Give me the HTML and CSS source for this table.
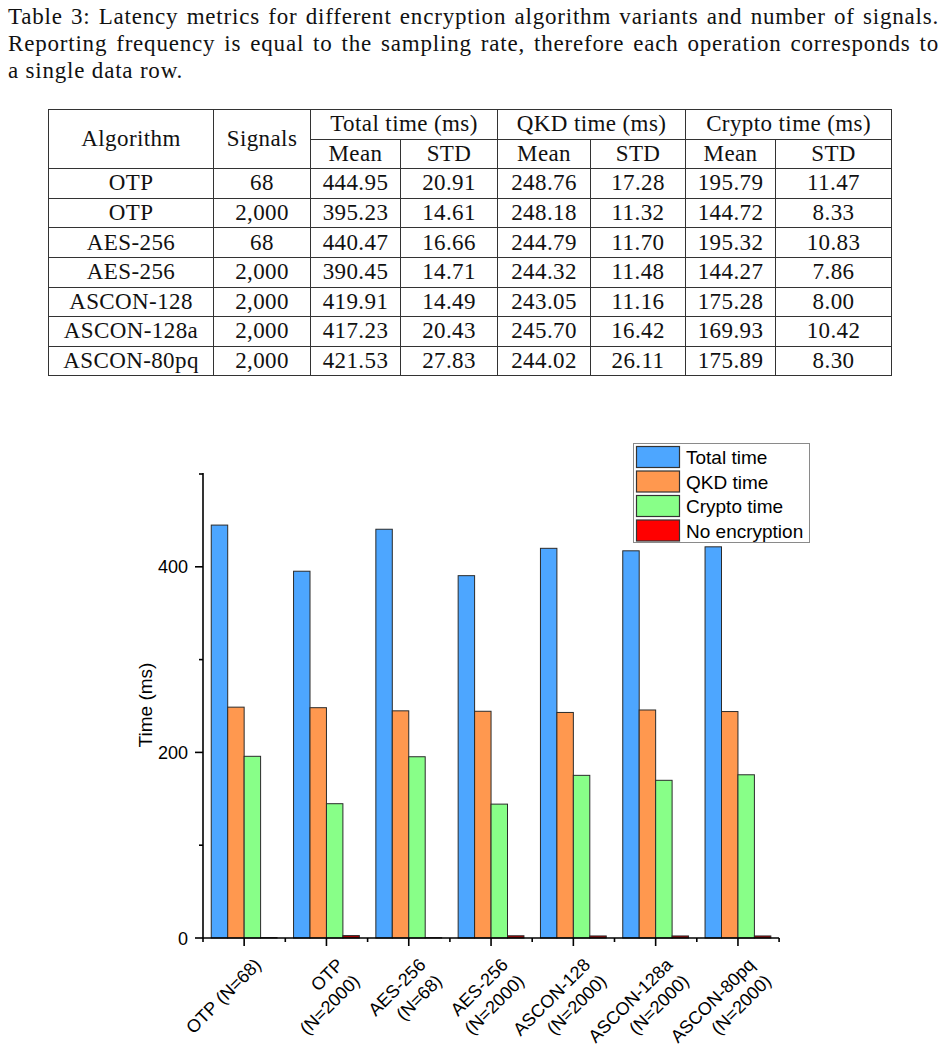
FILE: index.html
```html
<!DOCTYPE html>
<html lang="en">
<head>
    <meta charset="UTF-8">
    <meta name="viewport" content="width=device-width, initial-scale=1.0">
    <title>Latency metrics</title>
    <link rel="stylesheet" href="styles.css">
</head>
<body>
    <p class="caption">
        <span class="line justified">Table 3: Latency metrics for different encryption algorithm variants and number of signals.</span>
        <span class="line justified">Reporting frequency is equal to the sampling rate, therefore each operation corresponds to</span>
        <span class="line">a single data row.</span>
    </p>

    <table class="metrics">
        <colgroup>
            <col class="col-algo">
            <col class="col-signals">
            <col class="col-90"><col class="col-97">
            <col class="col-93"><col class="col-95">
            <col class="col-90"><col class="col-116">
        </colgroup>
        <thead>
            <tr>
                <th rowspan="2">Algorithm</th>
                <th rowspan="2">Signals</th>
                <th colspan="2">Total time (ms)</th>
                <th colspan="2">QKD time (ms)</th>
                <th colspan="2">Crypto time (ms)</th>
            </tr>
            <tr>
                <th>Mean</th><th>STD</th>
                <th>Mean</th><th>STD</th>
                <th>Mean</th><th>STD</th>
            </tr>
        </thead>
        <tbody>
            <tr><td>OTP</td><td>68</td><td>444.95</td><td>20.91</td><td>248.76</td><td>17.28</td><td>195.79</td><td>11.47</td></tr>
            <tr><td>OTP</td><td>2,000</td><td>395.23</td><td>14.61</td><td>248.18</td><td>11.32</td><td>144.72</td><td>8.33</td></tr>
            <tr><td>AES-256</td><td>68</td><td>440.47</td><td>16.66</td><td>244.79</td><td>11.70</td><td>195.32</td><td>10.83</td></tr>
            <tr><td>AES-256</td><td>2,000</td><td>390.45</td><td>14.71</td><td>244.32</td><td>11.48</td><td>144.27</td><td>7.86</td></tr>
            <tr><td>ASCON-128</td><td>2,000</td><td>419.91</td><td>14.49</td><td>243.05</td><td>11.16</td><td>175.28</td><td>8.00</td></tr>
            <tr><td>ASCON-128a</td><td>2,000</td><td>417.23</td><td>20.43</td><td>245.70</td><td>16.42</td><td>169.93</td><td>10.42</td></tr>
            <tr><td>ASCON-80pq</td><td>2,000</td><td>421.53</td><td>27.83</td><td>244.02</td><td>26.11</td><td>175.89</td><td>8.30</td></tr>
        </tbody>
    </table>

    <!-- Chart uses page coordinates through the viewBox -->
    <svg id="chart" class="chart" width="947" height="649" viewBox="0 400 947 649"></svg>

<script>
const groups = [
    { label: ['OTP (N=68)'], total: 444.95, qkd: 248.76, crypto: 195.79, none: 0.4 },
    { label: ['OTP', '(N=2000)'], total: 395.23, qkd: 248.18, crypto: 144.72, none: 2.6 },
    { label: ['AES-256', '(N=68)'], total: 440.47, qkd: 244.79, crypto: 195.32, none: 0.4 },
    { label: ['AES-256', '(N=2000)'], total: 390.45, qkd: 244.32, crypto: 144.27, none: 2.4 },
    { label: ['ASCON-128', '(N=2000)'], total: 419.91, qkd: 243.05, crypto: 175.28, none: 2.2 },
    { label: ['ASCON-128a', '(N=2000)'], total: 417.23, qkd: 245.70, crypto: 169.93, none: 2.2 },
    { label: ['ASCON-80pq', '(N=2000)'], total: 421.53, qkd: 244.02, crypto: 175.89, none: 2.2 }
];

const series = [
    { key: 'total', name: 'Total time', cls: 'bar-total' },
    { key: 'qkd', name: 'QKD time', cls: 'bar-qkd' },
    { key: 'crypto', name: 'Crypto time', cls: 'bar-crypto' },
    { key: 'none', name: 'No encryption', cls: 'bar-none' }
];

const Y0 = 939;        // pixel row of value 0
const SCALE = 0.928;   // pixels per ms
const X0 = 203;        // y axis position
const GROUP_W = 82.3;
const BAR_W = 16.45;

const svg = document.getElementById('chart');

function add(tag, attrs, text) {
    const el = document.createElementNS('http://www.w3.org/2000/svg', tag);
    for (const name in attrs) {
        el.setAttribute(name, attrs[name]);
    }
    if (text) el.textContent = text;
    svg.appendChild(el);
    return el;
}

function yPos(v) {
    return Y0 - v * SCALE;
}

// bars
groups.forEach((g, i) => {
    const cx = X0 + (i + 0.5) * GROUP_W;
    series.forEach((s, k) => {
        add('rect', {
            x: cx - 2 * BAR_W + k * BAR_W,
            y: yPos(g[s.key]),
            width: BAR_W,
            height: g[s.key] * SCALE,
            class: 'bar ' + s.cls
        });
    });
});

// y axis
add('line', { x1: X0, y1: 474, x2: X0, y2: Y0 + 0.5, class: 'axis' });
for (let v = 0; v <= 500; v += 100) {
    const major = v % 200 === 0;
    add('line', { x1: X0 - (major ? 8 : 4), y1: yPos(v), x2: X0, y2: yPos(v), class: 'axis' });
    if (major) {
        add('text', { x: 188, y: yPos(v) + 6.5, class: 'tick-label' }, String(v));
    }
}
add('text', { x: 152, y: 706, class: 'axis-title', transform: 'rotate(-90 152 706)' }, 'Time (ms)');

// x axis
const xEnd = X0 + groups.length * GROUP_W;
add('line', { x1: X0, y1: Y0, x2: xEnd, y2: Y0, class: 'axis' });
for (let i = 0; i <= groups.length; i++) {
    const x = X0 + i * GROUP_W;
    add('line', { x1: x, y1: Y0, x2: x, y2: Y0 + 4, class: 'axis' });
}
groups.forEach((g, i) => {
    const cx = X0 + (i + 0.5) * GROUP_W;
    add('line', { x1: cx, y1: Y0, x2: cx, y2: Y0 + 8, class: 'axis' });
    const label = add('text', {
        class: 'x-label',
        transform: `translate(${cx + 18} 967) rotate(-45)`
    });
    g.label.forEach((line, n) => {
        const span = document.createElementNS('http://www.w3.org/2000/svg', 'tspan');
        span.setAttribute('x', 0);
        span.setAttribute('y', n * 23);
        span.textContent = line;
        label.appendChild(span);
    });
});

// legend
add('rect', { x: 633.5, y: 444.5, width: 176, height: 99, class: 'legend-box' });
series.forEach((s, k) => {
    const top = 447.5 + k * 24.5;
    add('rect', { x: 636.5, y: top, width: 43, height: 21, class: 'swatch ' + s.cls });
    add('text', { x: 686, y: top + 17.5, class: 'legend-text' }, s.name);
});
</script>
</body>
</html>
```

FILE: styles.css
```css
body {
    margin: 0;
    padding: 0;
    background-color: #ffffff;
    color: #000000;
    font-family: "Liberation Serif", "Times New Roman", serif;
}
.caption {
    margin: 0;
    padding: 3px 8px 0 8px;
    width: 931px;
    font-size: 23px;
    line-height: 27px;
    letter-spacing: 0.8px;
    color: #111111;
}
.caption .line {
    display: block;
}
.caption .justified {
    text-align: justify;
    text-align-last: justify;
}
.metrics {
    margin: 25px 0 0 48px;
    border-collapse: collapse;
    table-layout: fixed;
    width: 844px;
    font-size: 23px;
    letter-spacing: 0.4px;
    color: #111111;
}
.col-algo { width: 165px; }
.col-signals { width: 97px; }
.col-90 { width: 90px; }
.col-93 { width: 93px; }
.col-95 { width: 95px; }
.col-97 { width: 97px; }
.col-116 { width: 116px; }
.metrics th,
.metrics td {
    border: 1px solid #333333;
    padding: 0;
    height: 28.6px;
    line-height: 26px;
    text-align: center;
    font-weight: normal;
    white-space: nowrap;
}
.chart {
    display: block;
    margin-top: 23px;
}
.chart text {
    font-family: "Liberation Sans", Arial, sans-serif;
    fill: #000000;
}
.axis {
    stroke: #000000;
    stroke-width: 1.6;
}
.tick-label {
    font-size: 18px;
    text-anchor: end;
}
.axis-title {
    font-size: 19px;
    text-anchor: middle;
}
.x-label {
    font-size: 18px;
    text-anchor: end;
}
.bar {
    stroke: #2b2b2b;
    stroke-width: 1;
}
.bar-total { fill: #4da6ff; }
.bar-qkd { fill: #ff984f; }
.bar-crypto { fill: #88ff88; }
.bar-none { fill: #ff0000; }
.bar.bar-none { fill: #aa0000; }
.legend-box {
    fill: #ffffff;
    stroke: #8a8a8a;
    stroke-width: 1;
}
.swatch {
    stroke: #333333;
    stroke-width: 1.2;
}
.legend-text {
    font-size: 19px;
}
```
